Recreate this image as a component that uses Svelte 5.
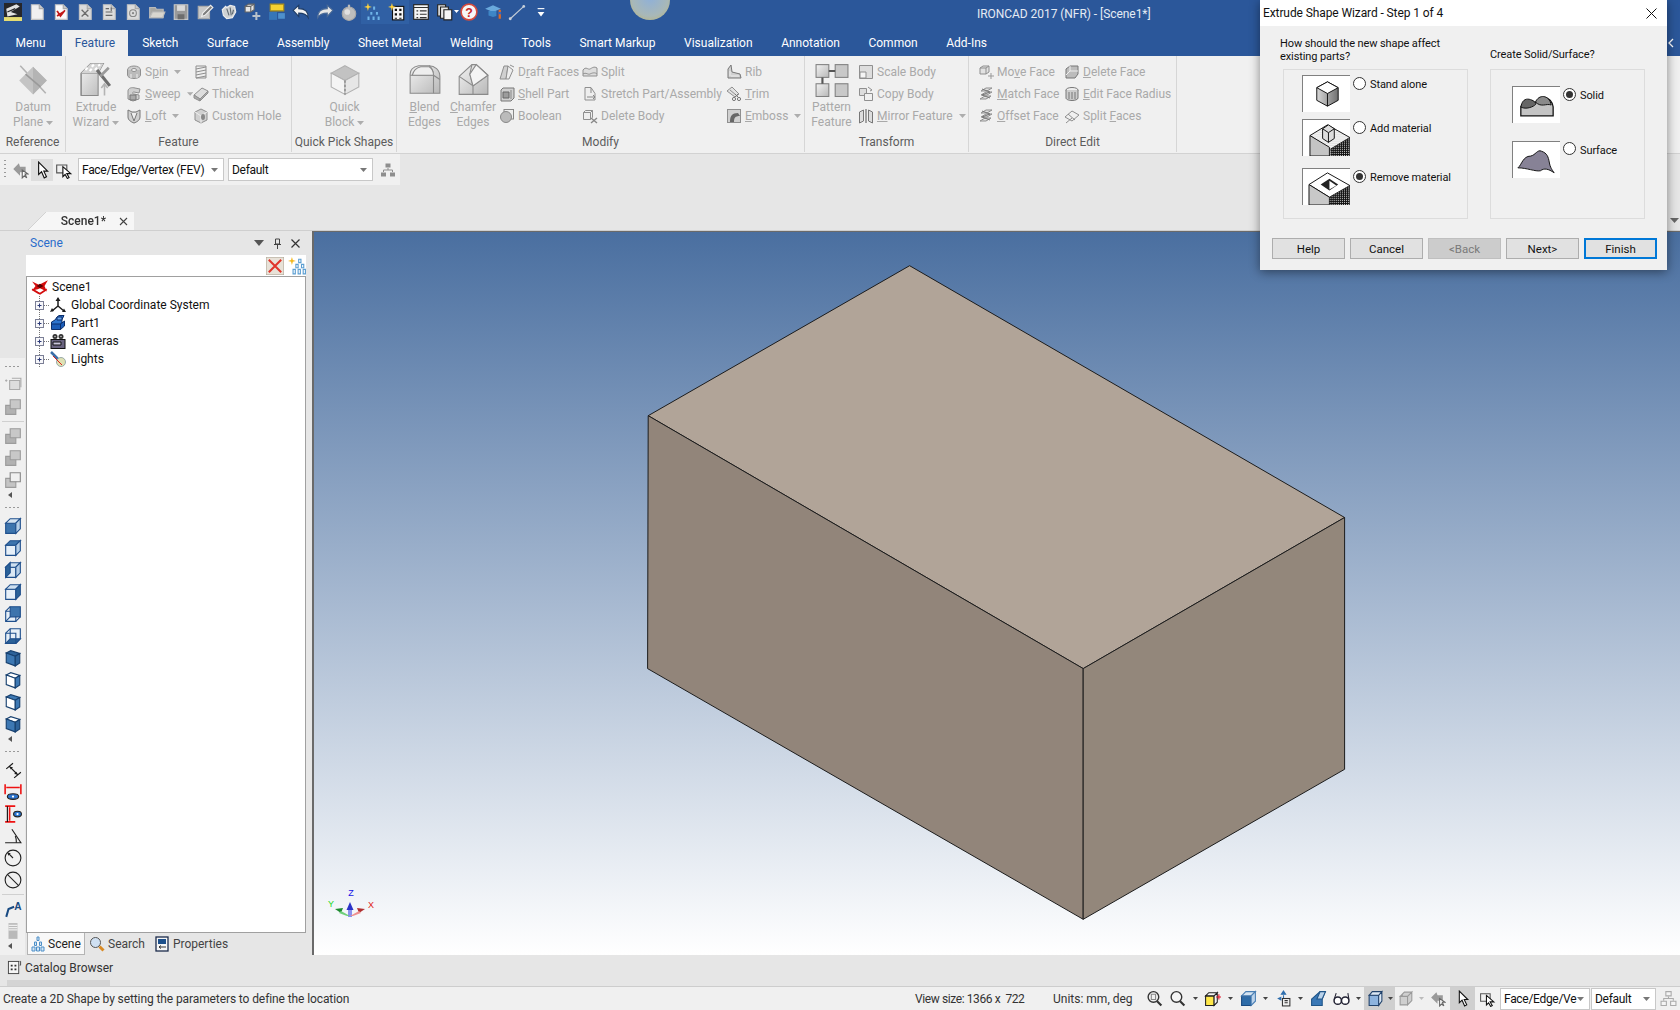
<script>
	const g = '#8f8f8f';
	const f = '#d0d0d0';
	const page = (x = '', bg = '#f0f0f0') =>
		`<path d="M3 1.500h7l3.500 3.500v9.500H3z" fill="${bg}" stroke="#c4c4c4"/><path d="M10 1.500V5h3.500" fill="#c8c8c8" stroke="#aaa"/>${x}`;
	const cubeBase = (front, top, side) =>
		`<path d="M1.500 5.500h9v9h-9z" fill="${front}" stroke="#1f4f8c"/><path d="M1.500 5.500l4-4h9l-4 4z" fill="${top}" stroke="#1f4f8c"/><path d="M10.500 5.500l4-4v9l-4 4z" fill="${side}" stroke="#1f4f8c"/>`;
	// small rotated cube: top, front, right face
	const turned = (a, b, c) =>
		`<path d="M2 3.500L6 1.500l8 2.500-4 2.500z" fill="${a}" stroke="#17406f"/><path d="M2 3.500l8 3v8.500l-8-3z" fill="${b}" stroke="#17406f"/><path d="M14 4l-4 2.500V15l4-2.500z" fill="${c}" stroke="#17406f"/>`;
	const stack = `<path d="M3 5l5-3h6l-5 3zM3 9l5-3h6l-5 3zM2 13l5-3h6l-5 3z" fill="#e0e0e0" stroke="${g}"/><path d="M4 3l8 3-8 3 8 3" fill="none" stroke="#777"/>`;

	const icons = {
		qlogo: `<rect width="16" height="16" fill="#26262a"/><path d="M2 5l9-4 3 2-8 5 6 2-9 2z" fill="#e2e2e2"/><path d="M3 8l7-3" stroke="#26262a"/><rect y="12.500" width="16" height="3.500" fill="#e6dc72"/>`,
		qnew: page(),
		qcheck: page(`<path d="M4.500 7l3 4.500 4-5M4.500 11.500L10 8" stroke="#c01818" stroke-width="1.600" fill="none"/>`, '#fafafa'),
		qa: page(`<path d="M5 6l3 3-3 3M11 6L8 9l3 3" stroke="#6c6c6c" fill="none" stroke-width="1.200"/>`, '#dcdcdc'),
		qb: page(`<path d="M5 5h3M5 8h6M5 11h6M10 4v3" stroke="#666" fill="none"/>`, '#dcdcdc'),
		qc: page(`<circle cx="8" cy="9" r="3" fill="none" stroke="#888"/><circle cx="8" cy="9" r="1" fill="#888"/>`, '#dcdcdc'),
		qopen: `<path d="M1.500 13V4h5l1 1.500h6V13z" fill="#a8a8a4" stroke="#bbb"/><path d="M1.500 13l2.500-5h11l-2 5z" fill="#d8d6cf" stroke="#bbb"/>`,
		qsave: `<path d="M2 1.500h12v13H2z" fill="#9a9a9a" stroke="#c8c8c8"/><path d="M4.500 2h7v5h-7z" fill="#dadada"/><path d="M5 10h6v4.500H5z" fill="#6d6d6d"/>`,
		qsaveas: `<path d="M2 3h10v11H2z" fill="#c8c8c8" stroke="#aaa"/><path d="M6 9l7-7 2 2-7 7-3 1z" fill="#7c7c7c" stroke="#eee"/>`,
		qprint: `<path d="M2 6l3-3 1 1 3-2 4 1 1 5-3 5-5 1-3-3z" fill="#cfd2d4" stroke="#eee"/><path d="M6 5l2 6M9 4l1 7M12 6l-1 4" stroke="#5f6a72"/>`,
		qplus: `<path d="M1 3l3-2h5v5l-3 2H1z" fill="#e6e6e6" stroke="#666"/><path d="M1 3h5v5M6 3l3-2" fill="none" stroke="#666"/><path d="M11 8v7M7.500 11.500h7" stroke="#b9c2ca" stroke-width="1.800"/>`,
		qbrowse: `<path d="M2 1h12v6H2z" fill="#f5d130" stroke="#a88e1c"/><path d="M1 8h7v7H1z" fill="#3676b8"/><path d="M9 9h6v5H9z" fill="#4e90cc"/>`,
		qundo: `<path d="M1 6.500l5-4.500v3c5 0 8.500 1.500 8.500 8C12.500 9.500 10 9 6 9v3z" fill="#f2f2f2" stroke="#1f3c64"/>`,
		qredo: `<path d="M15 6.500L10 2v3C5 5 1.500 6.500 1.500 13 3.500 9.500 6 9 10 9v3z" fill="#e6e6e6" stroke="#4a6a96"/>`,
		qball: `<circle cx="8" cy="9.500" r="6" fill="#bdbdbd" stroke="#a8a8a8"/><path d="M7 1.500h2v3H7z" fill="#bbb"/><circle cx="6.500" cy="8" r="2.500" fill="#e0e0e0"/>`,
		qtree: `<path d="M3.500 0l.8 2.700L7 3.500l-2.700.8L3.500 7l-.8-2.700L0 3.500l2.700-.8z" fill="#ffd23c"/><path d="M9 3v3M6.500 8v2.500M11.500 8v2.500M4 12v3M8.500 12v3M13 12v3" stroke="#6fb4e8" stroke-width="1.800"/>`,
		qgrid: `<rect x="4" y="3" width="10" height="12" fill="#f4f4f4" stroke="#111"/><path d="M6 5h2v2H6zM10 5h2v2h-2zM6 9h2v2H6zM10 9h2v2h-2zM6 13h2v1H6zM10 13h2v1h-2z" fill="#111"/><path d="M3.500 0l.8 2.700L7 3.500l-2.700.8L3.500 7l-.8-2.700L0 3.500l2.700-.8z" fill="#ffd23c"/>`,
		qlist: `<rect x="1.500" y="1.500" width="13" height="13" fill="#f6f6f6" stroke="#222"/><path d="M1.500 4h13M4 7h1.500M4 10h1.500M4 13h1.500M7 7h6M7 10h6M7 13h6" stroke="#333"/>`,
		qcopy: `<path d="M1.500 1.500h7v10h-7z" fill="#e0e0e0" stroke="#222"/><path d="M4 3.500h7v10H4z" fill="#e8e8e8" stroke="#222"/><path d="M7 6h7v9H7z" fill="#f6f6f6" stroke="#222"/>`,
		qhelp: `<circle cx="8" cy="8" r="7" fill="#f7f7f7" stroke="#d64a3c" stroke-width="1.400"/><text x="8" y="12" font-family="Liberation Sans" font-size="11" font-weight="700" text-anchor="middle" fill="#c62525">?</text>`,
		qcap: `<path d="M1 5l7-3 7 3-7 3z" fill="#6aa9dc"/><path d="M4 7v4l4 1.500 3-1V7z" fill="#3e86c6"/><path d="M13 6h2v8h-2z" fill="#e06a24"/><path d="M13 8h2v2h-2z" fill="#2a6ad0"/>`,
		qline: `<path d="M2 14L14 3" stroke="#c5ced8"/><circle cx="2" cy="14" r="1.300" fill="#c8d0da"/><circle cx="14" cy="3" r="1.200" fill="#c8d0da"/>`,
		qmore: `<path d="M5 5h6" stroke="#fff"/><path d="M5 8h6l-3 4z" fill="#fff"/>`,

		spin: `<ellipse cx="8" cy="6" rx="6.500" ry="4" fill="${f}" stroke="${g}"/><path d="M1.500 6v5c0 2 3 3.500 6.500 3.500s6.500-1.500 6.500-3.500V6" fill="#bbb" stroke="${g}"/><ellipse cx="8" cy="6" rx="2.500" ry="1.500" fill="#f2f2f2" stroke="${g}"/><path d="M5 10v4M11 10v4" stroke="#eee"/>`,
		sweep: `<path d="M2 5c0-3 4-4 7-3l5 1-1 4-5-1c-2 0-2 2 0 2l5 1v4l-6 2-5-2V9z" fill="${f}" stroke="${g}"/><path d="M4 9h6v5H4z" fill="#aaa" stroke="#777"/>`,
		loft: `<path d="M2 2l4 2h4l4-2v7c0 3-3 5-6 6-3-1-6-3-6-6z" fill="${f}" stroke="#777"/><path d="M5 5l3 8 3-8" fill="#eee" stroke="#777"/>`,
		thread: `<path d="M3 2h10v12H3z" fill="#eee" stroke="${g}"/><path d="M3 5l10-2M3 8l10-2M3 11l10-2M3 14l10-2" stroke="${g}"/>`,
		thicken: `<path d="M1 9l8-7 6 3-8 8z" fill="#ddd" stroke="${g}"/><path d="M1 9v3l6 3v-2zM7 13v2l8-8V5z" fill="#aaa" stroke="${g}"/>`,
		hole: `<path d="M8 1l6 3v8l-6 3-6-3V4z" fill="${f}" stroke="${g}"/><path d="M8 8l6-4M8 8v7M8 8L2 4" stroke="#eee" fill="none"/><ellipse cx="10" cy="9" rx="2" ry="3" fill="#888"/>`,
		draft: `<path d="M1 15l4-13h4l-2 13z" fill="${f}" stroke="${g}"/><path d="M9 2l5 4-4 9H7z" fill="#eee" stroke="${g}"/><path d="M11 1l4 2" stroke="${g}"/>`,
		shell: `<path d="M2 4l2-2h11v10l-3 3H2z" fill="${f}" stroke="#777"/><path d="M4 6h6v6H4z" fill="#9c9c9c" stroke="#666"/><path d="M12 4v9" stroke="#888"/>`,
		boolean: `<rect x="5" y="1.500" width="9.500" height="9.500" fill="#eee" stroke="#888"/><circle cx="7" cy="9" r="5.500" fill="#bbb" stroke="#888"/>`,
		split: `<path d="M1 6c3-4 5 0 7-1s4-3 7-1v8H1z" fill="#ddd" stroke="${g}"/><path d="M1 10c3-2 5 1 7 0s5-2 7 0" fill="none" stroke="${g}"/>`,
		stretch: `<path d="M3 14V1.500h6l4 6V14z" fill="#eee" stroke="${g}"/><path d="M5 11h8M11 9l2 2-2 2M9 2v5" stroke="#888" fill="none"/>`,
		delbody: `<path d="M1.500 4.500l2-2h7v7l-2 2h-7zM1.500 4.500h7v7M8.500 4.500l2-2" fill="#eee" stroke="${g}"/><path d="M9 10l6 5M15 10l-6 5" stroke="#888" stroke-width="1.400"/>`,
		rib: `<path d="M2 14V5l3-4 1 7 8 2 1 4z" fill="${f}" stroke="#777"/><path d="M5 12h8M4 7v5" stroke="#eee"/>`,
		trim: `<path d="M1 5l5-4 7 7-4 3z" fill="#e2e2e2" stroke="${g}"/><path d="M4 4l6 5" stroke="${g}"/><circle cx="8" cy="13" r="1.600" fill="none" stroke="#777"/><circle cx="13" cy="13" r="1.600" fill="none" stroke="#777"/><path d="M9 11l3-3M12 11L9 8" stroke="#777"/>`,
		emboss: `<rect x="1.500" y="1.500" width="13" height="13" fill="${f}" stroke="${g}"/><path d="M4 14c0-6 2-9 8-9l2 3c-5 0-6 2-6 6z" fill="#666"/>`,
		scale: `<path d="M1.500 1.500h13v13h-13z" fill="#ddd" stroke="${g}"/><path d="M2 8h6v6H2z" fill="#f5f5f5" stroke="${g}"/>`,
		copybody: `<path d="M1.500 2.500h7v7h-7z" fill="#ddd" stroke="${g}"/><path d="M6.500 7.500h8v7h-8z" fill="#f0f0f0" stroke="${g}"/><path d="M10 1l4 3-2 1" fill="none" stroke="${g}"/>`,
		mirror: `<path d="M1.500 4l4-2v11l-4 2zM14.500 4l-4-2v11l4 2z" fill="#ddd" stroke="#777"/><path d="M8 1v14" stroke="#555"/>`,
		moveface: `<path d="M2 4l3-2h6v6l-3 2H2zM2 4h6v6M8 4l3-2" fill="#e2e2e2" stroke="${g}"/><path d="M13 9v6M10 12h6" stroke="#999"/>`,
		matchface: stack,
		offsetface: stack,
		delface: `<path d="M2 5l4-3h8v8l-3 4H2z" fill="#bcbcbc" stroke="#777"/><path d="M6 2v5h8M6 7l-4 4" stroke="#eee" fill="none"/>`,
		radius: `<ellipse cx="8" cy="4" rx="6" ry="2.500" fill="#eee" stroke="#777"/><path d="M2 4v8c0 1.500 3 2.500 6 2.500s6-1 6-2.500V4" fill="#ccc" stroke="#777"/><path d="M8 6v7M5 6v7M11 6v7" stroke="#777"/>`,
		splitface: `<path d="M1 9l7-6 7 4-7 6z" fill="#f0f0f0" stroke="${g}"/><path d="M2 15l6-5M4 6l7 6" stroke="${g}"/>`,

		selBack: `<path d="M2 7l5-5 1 3h5v5H8v3z" fill="#9a9a9a"/><path d="M10 8l0 7 1.800-1.800L14 15l-1.500-3.500h2.500z" fill="#fff" stroke="#666"/>`,
		arrow: `<path d="M5 1l0 11 2.600-2.400L10 15l2-1-2.400-5H13z" fill="#fff" stroke="#111"/>`,
		boxArrow: `<path d="M1.500 3.500h9v7h-9z" fill="none" stroke="#555"/><path d="M7 5l0 9 2-2 2 3.500 1.500-.8-2-3.500H14z" fill="#fff" stroke="#111"/>`,
		hier: `<path d="M5.500 1.500h5v4h-5zM1 10.500h5v4H1zM10 10.500h5v4h-5z" fill="#8e8e8e"/><path d="M8 6v2M3.500 10V8h9v2" stroke="#8e8e8e" fill="none"/>`,
		hierDim: `<path d="M5.500 1.500h5v4h-5zM1 10.500h5v4H1zM10 10.500h5v4h-5z" fill="#f4f4f4" stroke="#aaa"/><path d="M8 6v2M3.500 10V8h9v2" stroke="#aaa" fill="none"/>`,

		treeTop: `<path d="M3.500 0l.8 2.700L7 3.500l-2.700.8L3.500 7l-.8-2.700L0 3.500l2.700-.8z" fill="#f3b81f"/><path d="M9.500 2h2v3h-2zM7 6.500h2v3H7zM12 6.500h2v3h-2zM4.500 11h2v4h-2zM9 11h2v4H9zM13.500 11h2v4h-2z" fill="none" stroke="#5d9fd2"/>`,
		treeBlue: `<path d="M7 1h2v3.500H7zM4.500 6h2v3.500h-2zM9.500 6h2v3.500h-2zM2 11h3v4H2zM6.500 11h3v4h-3zM11 11h3v4h-3z" fill="#d6e6f4" stroke="#4c8fc8"/>`,
		sceneRed: `<path d="M1 3l6 3 2-1 6-3-3 5 2 5-6-3-2 1-5 1 3-4z" fill="#d40d0d"/><path d="M5 7l3 2 3-2-3-2z" fill="#5c0000"/><path d="M1 10l5 3 2 1 6-4" fill="none" stroke="#d40d0d" stroke-width="1.600"/>`,
		axes: `<path d="M8 9V1.500M8 9l-6 5M8 9l6 5" stroke="#1d1d1d" stroke-width="1.500" fill="none"/><path d="M8 0l2.500 4h-5zM0 15l2-4 2 3zM16 15l-4 0 2-3.500z" fill="#1d1d1d"/>`,
		part: `<path d="M7 2l2-1.500h5l-2 4V8L3 13.500H1.500V7L5 5z" fill="#2d75cf" stroke="#0c2f6c"/><path d="M1.500 9h9v5.500h-9zM10.500 9l4-3v5l-4 3.500z" fill="#1b5cb7" stroke="#0c2f6c"/><path d="M7 2h5v3H7z" fill="#6aa7ee" stroke="#0c2f6c"/>`,
		camera: `<circle cx="5" cy="3.500" r="2.500" fill="#333"/><circle cx="11" cy="3.500" r="2.500" fill="#333"/><circle cx="5" cy="3.500" r=".8" fill="#ccc"/><circle cx="11" cy="3.500" r=".8" fill="#ccc"/><rect x="1" y="6.500" width="14" height="9" fill="#6a6480" stroke="#111"/><path d="M3 9h8v3H3z" fill="#c9c4da" stroke="#111"/>`,
		light: `<path d="M1 1l8 8" stroke="#3b6ea8" stroke-width="2.500"/><circle cx="11" cy="11" r="4.500" fill="#dfe2b4" stroke="#9aa"/><path d="M3 5l9 9" stroke="#e0201a"/>`,
		redX: `<rect width="16" height="16" fill="#e8e2d8" stroke="#b0a898"/><path d="M2.500 2.500l11 11M13.500 2.500l-11 11" stroke="#e1352a" stroke-width="1.800"/>`,
		mag: `<circle cx="6.500" cy="6.500" r="5" fill="#cfe0f2" stroke="#555"/><path d="M10.500 10.500l4 4" stroke="#d98a24" stroke-width="3"/>`,
		props: `<rect x="2" y="1" width="12" height="14" fill="#f6f6f6" stroke="#1c2c4c" stroke-width="1.300"/><rect x="4" y="3" width="8" height="5" fill="#1c4f8a"/><path d="M5 11h7M5 11l2-1.500M5 11l2 1.500" stroke="#333" fill="none"/>`,
		catalog: `<rect x="1.500" y="1.500" width="11" height="13" fill="#f5f5f5" stroke="#444"/><path d="M4 5h2v2H4zM8 5h2v2H8zM4 9h2v2H4zM8 9h2v2H8z" fill="#333"/><path d="M13.500 1.500h1v4h-1" stroke="#444" fill="none"/>`,

		gPlus: `<path d="M5 4h9v8H5z" fill="#ddd" stroke="#aaa"/><path d="M3 4H1M2 3v2" stroke="#aaa"/><path d="M7 2h8v8" fill="none" stroke="#aaa"/>`,
		gBoxes: `<path d="M1.500 6.500h9v8h-9z" fill="#b2b2b2" stroke="#9c9c9c"/><path d="M5.500 1.500h9v8h-9z" fill="#c8c8c8" stroke="#9c9c9c"/>`,
		gLight: `<path d="M1.500 6.500h9v8h-9z" fill="#c4c4c4" stroke="#9c9c9c"/><path d="M5.500 1.500h9v8h-9z" fill="#f0f0f0" stroke="#888"/>`,
		cFront: cubeBase('#3d74ad', '#d5e3f1', '#b4cde6'),
		cTop: cubeBase('#e6eff8', '#3d74ad', '#b4cde6'),
		cLeft: `<path d="M1.500 5.500h9v9h-9z" fill="#dbe8f4" stroke="#1f4f8c"/><path d="M1.500 5.500l4-4h9l-4 4z" fill="#cfe0f0" stroke="#1f4f8c"/><path d="M10.500 5.500l4-4v9l-4 4z" fill="#b4cde6" stroke="#1f4f8c"/><path d="M1.500 5.500l4-4v9l-4 4z" fill="#2b6299" stroke="#1f4f8c"/>`,
		cRight: cubeBase('#e6eff8', '#cfe0f0', '#2b6299'),
		cBack: `<path d="M1.500 5.500h9v9h-9z" fill="#e6eff8" stroke="#1f4f8c"/><path d="M5.500 1.500h9v9h-9z" fill="#3d74ad" stroke="#1f4f8c"/><path d="M1.500 5.500l4-4M10.500 14.500l4-4M1.500 14.500l4-4" stroke="#1f4f8c"/>`,
		cBottom: `<path d="M1.500 5.500l4-4h9v9l-4 4h-9z" fill="#e6eff8" stroke="#1f4f8c"/><path d="M1.500 14.500l4-4h9l-4 4z" fill="#2b6299" stroke="#1f4f8c"/><path d="M5.500 1.500v9M1.500 5.500h9v9" stroke="#1f4f8c" fill="none"/>`,
		i1: turned('#2d6299', '#3d78b3', '#2d6299'),
		i2: turned('#ffffff', '#ffffff', '#3d78b3'),
		i3: turned('#3d78b3', '#ffffff', '#3d78b3'),
		i4: turned('#ffffff', '#3d78b3', '#2d6299'),
		dimL: `<path d="M2 7l6-5M9 15l6-5M5 5l7 7" stroke="#1a1a1a" fill="none"/><path d="M5 5l3 .5-2 2zM12 12l-3-.5 2-2z" fill="#1a1a1a"/>`,
		dimH: `<path d="M1 1v9M15 1v9M2 4h12" stroke="#e11" stroke-width="1.400"/><ellipse cx="8" cy="12" rx="5" ry="2.500" fill="#2a73cc" stroke="#222"/><circle cx="8" cy="12" r="1" fill="#fff"/>`,
		dimV: `<path d="M1 1h9M1 15h9M5 2v12" stroke="#e11" stroke-width="1.400"/><path d="M3 1v14" stroke="#111"/><ellipse cx="12" cy="8" rx="3.500" ry="2.500" fill="#2a73cc" stroke="#222"/><circle cx="12" cy="8" r="1" fill="#fff"/>`,
		angle: `<path d="M1 14h14L7 2" fill="none" stroke="#222"/><path d="M10 8c1 2 1 4 1 6" fill="none" stroke="#222"/>`,
		radial: `<circle cx="8" cy="8" r="7" fill="none" stroke="#222"/><path d="M8 8L3.500 3.500" stroke="#222"/><path d="M3 3l3 .8-2.200 2.200z" fill="#222"/>`,
		diam: `<circle cx="8" cy="8" r="7" fill="none" stroke="#222"/><path d="M3 3l10 10" stroke="#222"/>`,
		textA: `<path d="M2 15l2-7 5-2" fill="none" stroke="#184a82" stroke-width="1.800"/><text x="9" y="9" font-family="Liberation Sans" font-size="9" font-weight="700" fill="#184a82">A</text>`,
		bars: `<rect x="4" y="1" width="8" height="14" fill="#b9b9b9"/><path d="M4 3h8M4 5h8M4 7h8" stroke="#eee"/>`,

		zoomAll: `<circle cx="7" cy="6.500" r="5" fill="none" stroke="#333" stroke-width="1.300"/><path d="M5 4h4v5H5z" fill="none" stroke="#888"/><path d="M10.500 10.500l4 4" stroke="#333" stroke-width="2"/>`,
		zoomIn: `<circle cx="7" cy="6.500" r="5" fill="#f5f5f5" stroke="#333" stroke-width="1.300"/><path d="M10.500 10.500l4 4" stroke="#333" stroke-width="2"/>`,
		yellowBox: `<path d="M1.500 5.500h8v9h-8z" fill="#ffe84a" stroke="#222"/><path d="M1.500 5.500l3-3h8l-3 3zM9.500 5.500l3-3v9l-3 3z" fill="#f5f5f5" stroke="#222"/><path d="M14 4v5M11.500 6.500h5" stroke="#e0142a"/>`,
		blueBox: `<path d="M1.500 5.500h9v9h-9z" fill="#2e6ca8" stroke="#1a4a80"/><path d="M1.500 5.500l4-4h9l-4 4z" fill="#d6e4f2" stroke="#4a7fb4"/><path d="M10.500 5.500l4-4v9l-4 4z" fill="#bcd3ea" stroke="#4a7fb4"/>`,
		tools: `<path d="M8 1l2 3H6zM8 5v3" fill="#2f6fae" stroke="#2f6fae"/><path d="M2 8l4-2v4zM1 8h2" fill="#2f6fae"/><rect x="7" y="8" width="7" height="7" fill="#f0f0f0" stroke="#333"/><path d="M9 10h3M9 12h3" stroke="#333"/>`,
		slant: `<path d="M1.500 8.500l8-7h5l-3 7v6h-10z" fill="#3a78b6" stroke="#205588"/><path d="M9.500 1.500h5l-3 7h-5z" fill="#b9d2ea" stroke="#205588"/>`,
		glasses: `<circle cx="4.500" cy="10" r="3.500" fill="#fff" stroke="#223" stroke-width="1.400"/><circle cx="11.500" cy="10" r="3.500" fill="#fff" stroke="#223" stroke-width="1.400"/><path d="M1 9l2-6M15 9l-1-6" stroke="#223" fill="none"/>`,
		selBox: `<path d="M2 5h9v9.500H2z" fill="#8db3de" stroke="#20426c"/><path d="M2 5l3-3.500h9L11 5zM11 5l3-3.500v9l-3 4z" fill="#dce8f4" stroke="#20426c"/>`,
		greyBox: `<path d="M2 6h7v8H2zM2 6l4-4h7l-4 4zM9 6l4-4v8l-4 4zM4 6V4" fill="#cfcfcf" stroke="#9a9a9a"/>`
	};

	const quick = [
		'qnew', 'qcheck', 'qa', 'qb', 'qc', 'qopen', 'qsave', 'qsaveas', 'qprint', 'qplus', 'qbrowse',
		'qundo', 'qredo', 'qball', 'qtree', 'qgrid', 'qlist', 'qcopy', 'qhelp', 'qcap', 'qline', 'qmore'
	];

	const tabs = [
		'Menu', 'Feature', 'Sketch', 'Surface', 'Assembly', 'Sheet Metal', 'Welding', 'Tools',
		'Smart Markup', 'Visualization', 'Annotation', 'Common', 'Add-Ins'
	];

	const small = (w, ...items) => ({ kind: 'small', w, pad: 0, items });
	const large = (w, icon, lines, caret = false) => ({ kind: 'large', w, icon, lines, caret });
	const it = (icon, text, caret = false) => ({ icon, text, caret });

	// widths are the group spans read off the reference
	const groups = [
		{ label: 'Reference', w: 66, cols: [large(66, 'datum', ['Datum', 'Plane'], true)] },
		{
			label: 'Feature',
			w: 226,
			cols: [
				large(60, 'extrude', ['Extrude', 'Wizard'], true),
				small(67, it('spin', 'S_pin', true), it('sweep', '_Sweep', true), it('loft', '_Loft', true)),
				small(96, it('thread', 'Thread'), it('thicken', 'Thicken'), it('hole', 'Custom Hole'))
			]
		},
		{ label: 'Quick Pick Shapes', w: 105, cols: [large(105, 'quickb', ['Quick', 'Block'], true)] },
		{
			label: 'Modify',
			w: 408,
			cols: [
				large(55, 'blend', ['_Blend', 'Edges']),
				large(42, 'chamfer', ['_Chamfer', 'Edges']),
				{ ...small(88, it('draft', 'D_raft Faces'), it('shell', '_Shell Part'), it('boolean', 'Boolean')), pad: 5 },
				small(144, it('split', 'Split'), it('stretch', 'Stretch Part/Assembly'), it('delbody', 'Delete Body')),
				small(79, it('rib', 'Rib'), it('trim', '_Trim'), it('emboss', '_Emboss', true))
			]
		},
		{
			label: 'Transform',
			w: 164,
			cols: [
				large(53, 'pattern', ['Pattern', 'Feature']),
				small(111, it('scale', 'Scale Body'), it('copybody', 'Copy Body'), it('mirror', '_Mirror Feature', true))
			]
		},
		{
			label: 'Direct Edit',
			w: 208,
			cols: [
				{ ...small(95, it('moveface', 'Mo_ve Face'), it('matchface', '_Match Face'), it('offsetface', '_Offset Face')), pad: 9 },
				small(110, it('delface', '_Delete Face'), it('radius', '_Edit Face Radius'), it('splitface', 'Split _Faces'))
			]
		}
	];

	const bigIcons = {
		datum: `<path d="M4 3l24 26" stroke="#b2b2b2" stroke-width="1.500"/><path d="M16 4l13 13-13 13L3 17z" fill="#c4c4c4"/><path d="M16 4l13 13-13 13" fill="#b4b4b4"/><path d="M9 11l14 12" stroke="#9a9a9a" stroke-width="1.500"/>`,
		extrude: `<path d="M2 10L11 1h12l-5 9v21H2z" fill="url(#sheen)" stroke="#8a8a8a"/><path d="M2 10h16M2 31V10" fill="none" stroke="#8a8a8a"/><path d="M11 1h12l-5 9H2z" fill="#d4d4d4"/><path d="M6 7l2-2M10 8l2-2M12 4l2-2M15 7l2-2M18 3l2-1" stroke="#fff" stroke-width="2"/><path d="M17 7l12 15" stroke="#6e6e6e" stroke-width="3"/><path d="M28 5l-8 8" stroke="#9a9a9a" stroke-width="2.500"/><path d="M24 20v11M21 24l3-4 3 4" stroke="#b4b4b4" stroke-width="1.500" fill="none"/>`,
		quickb: `<path d="M16 3l13 7-13 7-13-7z" fill="#c2c2c2" stroke="#b0b0b0"/><path d="M3 10l13 7v13L3 23z" fill="#f4f4f4" stroke="#b0b0b0"/><path d="M29 10l-13 7v13l13-7z" fill="#e6e6e6" stroke="#b0b0b0"/><path d="M16 17v13" stroke="#777" stroke-dasharray="2 2"/>`,
		blend: `<path d="M2 11c0-4 3-7 8-8h10c5 0 10 4 10 10v16H2z" fill="url(#sheen)" stroke="#8a8a8a"/><path d="M2 12h22V29M24 12c0-4-2-7-4-9M24 12l6 4" fill="none" stroke="#8a8a8a"/><path d="M12 4h8c3 2 4 5 4 8H4c1-4 4-7 8-8z" fill="#eee" stroke="#8a8a8a"/>`,
		chamfer: `<path d="M3 13L15 2h4l11 10v18H3z" fill="url(#sheen)" stroke="#8a8a8a"/><path d="M3 13l13 9v8M16 22l14-10M15 2l-2 9 3 11M19 2l11 10" fill="none" stroke="#8a8a8a"/><path d="M19 2l11 10-14 10-3-11 6-9z" fill="#f4f4f4" stroke="#8a8a8a"/>`,
		pattern: `<rect x="1" y="2" width="12" height="12" fill="url(#sheen)" stroke="#808080"/><rect x="19" y="2" width="12" height="12" fill="#c8c8c8" stroke="#808080"/><rect x="1" y="20" width="12" height="12" fill="url(#sheen)" stroke="#808080"/><rect x="19" y="20" width="12" height="12" fill="#c8c8c8" stroke="#808080"/><path d="M7 14v6M13 8h6" stroke="#555" stroke-width="2"/>`
	};

	const rail = [
		'grip', 'gPlus', 'gBoxes', 'sep', 'gBoxes', 'gBoxes', 'gLight', 'back', 'grip',
		'cFront', 'cTop', 'cLeft', 'cRight', 'cBack', 'cBottom', 'i1', 'i2', 'i3', 'i4', 'back', 'grip',
		'dimL', 'dimH', 'dimV', 'angle', 'radial', 'diam', 'sep', 'textA', 'bars', 'back'
	];

	const tree = [
		{ icon: 'axes', text: 'Global Coordinate System' },
		{ icon: 'part', text: 'Part1' },
		{ icon: 'camera', text: 'Cameras' },
		{ icon: 'light', text: 'Lights' }
	];

	const statusTools = [
		{ n: 'zoomAll', w: 23 }, { n: 'zoomIn', w: 23 }, { c: 1, w: 12 }, { n: 'yellowBox', w: 22 }, { c: 1, w: 14 },
		{ n: 'blueBox', w: 22 }, { c: 1, w: 13 }, { n: 'tools', w: 22 }, { c: 1, w: 13 }, { n: 'slant', w: 23 },
		{ n: 'glasses', w: 23 }, { c: 1, w: 11 }, { n: 'selBox', w: 22, on: 1 }, { c: 1, w: 9, on: 1 },
		{ n: 'greyBox', w: 22 }, { c: 1, w: 8, dim: 1 }, { n: 'selBack', w: 25 }, { n: 'arrow', w: 25, on: 1 },
		{ n: 'boxArrow', w: 25 }
	];

	const parts = (s) => {
		const i = s.indexOf('_');
		return i < 0 ? [s, '', ''] : [s.slice(0, i), s[i + 1], s.slice(i + 2)];
	};
</script>

{#snippet ic(name, size = 16)}
	<svg class="ic" width={size} height={size} viewBox="0 0 16 16">{@html icons[name]}</svg>
{/snippet}

{#snippet caret()}
	<svg class="caret" width="7" height="4" viewBox="0 0 7 4"><path d="M0 0h7L3.500 4z" /></svg>
{/snippet}

{#snippet label(s)}
	{@const p = parts(s)}
	{p[0]}<u>{p[1]}</u>{p[2]}
{/snippet}

{#snippet expander()}
	<svg class="exp" width="19" height="18" viewBox="0 0 19 18">
		<path d="M8.500 0v18" stroke="#777" stroke-dasharray="1 1" />
		<path d="M13 9.500h6" stroke="#777" stroke-dasharray="1 1" />
		<rect x="4.500" y="5.500" width="8" height="8" fill="#f7f7fa" stroke="#7b7f96" />
		<path d="M6.500 9.500h4M8.500 7.500v4" stroke="#2c3a78" />
	</svg>
{/snippet}

{#snippet combo(text, w)}
	<div class="combo" style="width:{w}px"><span>{text}</span><svg class="caret" width="7" height="4" viewBox="0 0 7 4"><path d="M0 0h7L3.500 4z" /></svg></div>
{/snippet}

<svg class="defs" width="0" height="0">
	<defs>
		<linearGradient id="sheen" x1="0" y1="0" x2="1" y2="1">
			<stop offset="0" stop-color="#f2f2f2" />
			<stop offset="1" stop-color="#b8b8b8" />
		</linearGradient>
		<linearGradient id="cubeSide" x1="0" y1="0" x2="1" y2="0">
			<stop offset="0" stop-color="#d8d8d8" />
			<stop offset="1" stop-color="#707070" />
		</linearGradient>
		<pattern id="hatch" width="2" height="2" patternUnits="userSpaceOnUse">
			<rect width="2" height="2" fill="#111" />
			<rect width="1" height="1" fill="#ccc" />
		</pattern>
		<pattern id="lines" width="2" height="2" patternUnits="userSpaceOnUse">
			<rect width="2" height="2" fill="#fff" />
			<path d="M0 0h2" stroke="#777" stroke-width=".6" />
		</pattern>
	</defs>
</svg>

<div class="app">
	<header class="titlebar">
		<div class="logo">{@render ic('qlogo', 18)}</div>
		{#each quick as q, i}
			<div class="qcell" class:hot={i === 14 || i === 15}>
				{@render ic(q, 18)}
				{#if q === 'qcopy'}<svg class="qcaret" width="5" height="3" viewBox="0 0 5 3"><path d="M0 0h5L2.500 3z" fill="#fff" /></svg>{/if}
			</div>
		{/each}
		<div class="apptitle">IRONCAD 2017 (NFR) - [Scene1*]</div>
	</header>
	<div class="glass"></div>

	<nav class="tabs">
		{#each tabs as t}
			<div class="tab" class:active={t === 'Feature'}>{t}</div>
		{/each}
		<svg class="collapse" width="8" height="10" viewBox="0 0 8 10"><path d="M6 1L2 5l4 4" fill="none" stroke="#fff" stroke-width="1.300" /></svg>
	</nav>

	<section class="ribbon">
		{#each groups as grp}
			<div class="group" style="width:{grp.w}px">
				<div class="gbody">
					{#each grp.cols as col}
						{#if col.kind === 'large'}
							<div class="large" style="width:{col.w}px">
								<svg class="bigic" width="34" height="34" viewBox="0 0 32 32">{@html bigIcons[col.icon]}</svg>
								<div class="line">{@render label(col.lines[0])}</div>
								<div class="line">{@render label(col.lines[1])}{#if col.caret}{@render caret()}{/if}</div>
							</div>
						{:else}
							<div class="smallcol" style="width:{col.w}px;padding-left:{col.pad}px">
								{#each col.items as item}
									<div class="sitem">
										{@render ic(item.icon, 16)}
										<span>{@render label(item.text)}</span>
										{#if item.caret}{@render caret()}{/if}
									</div>
								{/each}
							</div>
						{/if}
					{/each}
				</div>
				<div class="glabel">{grp.label}</div>
			</div>
		{/each}
	</section>

	<div class="seltool">
		<span class="grip-v"></span>
		<div class="stool">{@render ic('selBack', 18)}</div>
		<div class="stool on">{@render ic('arrow', 18)}</div>
		<div class="stool before-combo">{@render ic('boxArrow', 18)}</div>
		{@render combo('Face/Edge/Vertex (FEV)', 146)}
		{@render combo('Default', 145)}
		<div class="stool">{@render ic('hier', 16)}</div>
	</div>

	<div class="tabstrip">
		<div class="doctabwrap">
			<div class="doctab">
				<span>Scene1*</span>
				<svg width="9" height="9" viewBox="0 0 9 9"><path d="M1 1l7 7M8 1L1 8" stroke="#444" stroke-width="1.100" /></svg>
			</div>
		</div>
	</div>

	<main class="work">
		<aside class="rail">
			{#each rail as r}
				{#if r === 'grip'}
					<div class="r-grip"></div>
				{:else if r === 'sep'}
					<div class="r-sep"></div>
				{:else if r === 'back'}
					<div class="r-back"><svg width="4" height="6" viewBox="0 0 4 6"><path d="M4 0v6L0 3z" fill="#555" /></svg></div>
				{:else}
					<div class="r-ic">{@render ic(r, 18)}</div>
				{/if}
			{/each}
		</aside>

		<div class="panel">
			<div class="phead">
				<span class="ptitle">Scene</span>
				<svg width="10" height="6" viewBox="0 0 10 6"><path d="M0 0h10L5 6z" fill="#555" /></svg>
				<svg width="9" height="11" viewBox="0 0 9 11"><path d="M2.500 1h4v5h-4zM1 6.500h7M4.500 7v4" fill="none" stroke="#444" /></svg>
				<svg width="9" height="9" viewBox="0 0 9 9"><path d="M.5.500l8 8M8.500.500l-8 8" stroke="#333" stroke-width="1.200" /></svg>
			</div>
			<div class="pfilter">
				{@render ic('redX', 18)}
				{@render ic('treeTop', 18)}
			</div>
			<div class="tree">
				<div class="troot">
					<span class="rooticon">{@render ic('sceneRed', 18)}</span>
					<span>Scene1</span>
				</div>
				{#each tree as node}
					<div class="trow">
						{@render expander()}
						{@render ic(node.icon, 16)}
						<span>{node.text}</span>
					</div>
				{/each}
			</div>
			<div class="ptabs">
				<div class="ptab on">{@render ic('treeBlue', 16)}Scene</div>
				<div class="ptab">{@render ic('mag', 16)}Search</div>
				<div class="ptab">{@render ic('props', 16)}Properties</div>
			</div>
		</div>

		<div class="viewport">
			<svg class="scene" viewBox="0 0 1366 722" width="1366" height="722">
				<g stroke="#1c1c1c" stroke-width="1" stroke-linejoin="round">
					<path d="M595.600 33.700L334.200 183.700L769.200 436.600L1030.600 285.500Z" fill="#b1a498" />
					<path d="M334.200 183.700L333.600 436.600L769.200 687.300L769.200 436.600Z" fill="#92857a" />
					<path d="M769.200 436.600L1030.600 285.500L1030.600 537.300L769.200 687.300Z" fill="#93877b" />
				</g>
				<g class="triad">
					<path d="M34 678h4v7h-4z" fill="#8a90ee" />
					<path d="M36 670l3.500 8h-7z" fill="#2a32c8" />
					<path d="M21 677l8-1-2 5z" fill="#1e8a30" />
					<path d="M27 679l9 5-3 0-8-3z" fill="#6fd07a" />
					<path d="M51 677l-8-1 2 5z" fill="#b03030" />
					<path d="M45 679l-9 5 3 0 8-3z" fill="#ee9090" />
					<text x="37" y="664" fill="#1414e6">Z</text>
					<text x="17" y="675" fill="#1cd81c">Y</text>
					<text x="57" y="676" fill="#e01616">X</text>
				</g>
			</svg>
			<svg class="vcaret" width="9" height="5" viewBox="0 0 9 5"><path d="M0 0h9L4.500 5z" fill="#666" /></svg>
		</div>
	</main>

	<div class="catalog">
		<div class="catlabel">{@render ic('catalog', 15)}<span>Catalog Browser</span></div>
		<div class="catbar"></div>
	</div>

	<footer class="status">
		<span class="s-msg">Create a 2D Shape by setting the parameters to define the location</span>
		<span class="s-view">View size: 1366 x  722</span>
		<span class="s-units">Units: mm, deg</span>
		{#each statusTools as t}
			<div class="s-cell" class:on={t.on} style="width:{t.w}px">
				{#if t.c}
					<svg width="5" height="3" viewBox="0 0 5 3"><path d="M0 0h5L2.500 3z" fill={t.dim ? '#bbb' : '#444'} /></svg>
				{:else}
					{@render ic(t.n, 17)}
				{/if}
			</div>
		{/each}
		{@render combo('Face/Edge/Ve', 90)}
		{@render combo('Default', 65)}
		<div class="s-cell" style="width:22px">{@render ic('hierDim', 17)}</div>
	</footer>

	<div class="dialog">
		<div class="dtitle">
			<span>Extrude Shape Wizard - Step 1 of 4</span>
			<svg width="11" height="11" viewBox="0 0 11 11"><path d="M.5.500l10 10M10.500.500l-10 10" stroke="#111" stroke-width="1" /></svg>
		</div>
		<div class="dbody">
			<div class="dcols">
				<div class="dcol left">
					<p class="dq two">How should the new shape affect<br />existing parts?</p>
					<div class="dbox">
						<div class="opt">
							<svg class="thumb" viewBox="0 0 48 37">
								<path d="M25 6l11 6v13l-11 6-11-6V12z" fill="url(#cubeSide)" stroke="#111" />
								<path d="M25 6l11 6-11 6-11-6z" fill="#fff" stroke="#111" />
								<path d="M25 18v13" stroke="#111" />
							</svg>
							<span class="radio"></span><span class="rlabel">Stand alone</span>
						</div>
						<div class="opt">
							<svg class="thumb" viewBox="0 0 48 37">
								<path d="M7 16L25 5l23 13-20 12z" fill="url(#lines)" stroke="#111" />
								<path d="M7 16v21h20V28z" fill="#c4c4c4" stroke="#111" />
								<path d="M28 30l20-12v19H28z" fill="url(#hatch)" />
								<path d="M26 5l6 4v10l-6 4-6-4V9z" fill="#ddd" stroke="#111" />
								<path d="M20 9l6 4 6-4M26 13v10" fill="none" stroke="#111" />
							</svg>
							<span class="radio"></span><span class="rlabel">Add material</span>
						</div>
						<div class="opt gapped">
							<svg class="thumb" viewBox="0 0 48 37">
								<path d="M6 16L25 4l23 13-21 12z" fill="#fff" stroke="#111" />
								<path d="M6 16v21h21V29z" fill="#c8c8c8" stroke="#111" />
								<path d="M27 29l21-12v20H27z" fill="url(#hatch)" />
								<path d="M18 16l9-6 9 6-9 6z" fill="#222" />
								<path d="M27 12l7 5-7 4z" fill="#fff" />
							</svg>
							<span class="radio checked"></span><span class="rlabel">Remove material</span>
						</div>
					</div>
				</div>
				<div class="dcol right">
					<p class="dq one">Create Solid/Surface?</p>
					<div class="dbox">
						<div class="opt">
							<svg class="thumb" viewBox="0 0 48 36">
								<path d="M8 20c4-8 10-8 15-4 3-8 16-8 18 4v9H8z" fill="#c4c4c4" stroke="#111" stroke-width="1.300" />
								<path d="M8 20c1-5 3-8 7-8 4 0 8 3 8 4 3 1-8 8-15 4z" fill="#666" stroke="#111" />
								<path d="M23 15c3-8 14-8 16 3-5-2-10 3-16-3z" fill="#8a8a8a" stroke="#111" />
							</svg>
							<span class="radio checked"></span><span class="rlabel">Solid</span>
						</div>
						<div class="opt second">
							<svg class="thumb" viewBox="0 0 48 36">
								<path d="M5 26c4-3 5-12 13-12 5-1 7-7 11-5 6 2 7 6 8 11 1 6 3 8 5 11-6-4-10-5-14-2-5 1-14-3-23-3z" fill="#878296" stroke="#111" />
							</svg>
							<span class="radio"></span><span class="rlabel">Surface</span>
						</div>
					</div>
				</div>
			</div>
			<div class="dbuttons">
				<button>Help</button>
				<button>Cancel</button>
				<button class="disabled">&lt;Back</button>
				<button>Next&gt;</button>
				<button class="primary">Finish</button>
			</div>
		</div>
	</div>
</div>

<style>
	:global(body) {
		margin: 0;
		background: #e6e6e6;
	}

	.defs {
		position: absolute;
	}

	.app {
		position: relative;
		display: flex;
		flex-direction: column;
		width: 1680px;
		height: 1010px;
		overflow: hidden;
		background: #e6e6e6;
		font-family: Roboto, 'Liberation Sans', sans-serif;
		font-size: 12px;
		color: #111;
	}

	.ic {
		display: block;
		flex: none;
	}

	.titlebar {
		display: flex;
		align-items: flex-start;
		height: 30px;
		background: #2b579a;
		color: #fff;
	}

	.logo {
		display: flex;
		justify-content: center;
		align-items: center;
		width: 25px;
		height: 24px;
	}

	.qcell {
		position: relative;
		display: flex;
		justify-content: center;
		align-items: center;
		width: 24px;
		height: 24px;
	}

	.qcell.hot {
		background: #3060a4;
	}

	.qcaret {
		position: absolute;
		right: -2px;
		top: 10px;
	}

	.apptitle {
		margin-left: 424px;
		padding-top: 7px;
		font-size: 12px;
		letter-spacing: -0.05px;
		color: #e4ebf4;
	}

	.glass {
		position: absolute;
		left: 630px;
		top: -20px;
		width: 40px;
		height: 40px;
		border-radius: 50%;
		background: radial-gradient(circle at 50% 45%, #8fb0d8 0, #a8b8b8 60%, #c0b468 100%);
	}

	.tabs {
		position: relative;
		display: flex;
		align-items: stretch;
		height: 26px;
		background: #2b579a;
	}

	.tab {
		display: flex;
		align-items: center;
		padding: 0 14.3px;
		color: #fff;
		font-size: 12px;
	}

	.tab:first-child {
		padding-left: 15.5px;
	}

	.tab.active {
		margin-left: 2px;
		padding: 0 8px;
		width: 66px;
		box-sizing: border-box;
		justify-content: center;
		background: #f0f0f0;
		color: #2b579a;
	}

	.collapse {
		position: absolute;
		right: 5px;
		top: 8px;
	}

	.ribbon {
		display: flex;
		height: 98px;
		box-sizing: border-box;
		background: #f0f0f0;
		border-bottom: 1px solid #d2d2d2;
	}

	.group {
		display: flex;
		flex-direction: column;
		height: 96px;
		box-sizing: border-box;
		border-right: 1px solid #d6d6d6;
	}

	.gbody {
		display: flex;
		height: 75px;
	}

	.large {
		display: flex;
		flex-direction: column;
		align-items: center;
		flex: none;
		padding-top: 6px;
		box-sizing: border-box;
		color: #a9a9a9;
		font-size: 12px;
		line-height: 15px;
	}

	.bigic {
		margin-bottom: 3px;
		height: 35px;
	}

	.line {
		white-space: nowrap;
	}

	.line .caret,
	.sitem .caret {
		margin-left: 3px;
		vertical-align: middle;
		fill: #adadad;
	}

	.smallcol {
		display: flex;
		flex-direction: column;
		flex: none;
		padding-top: 5px;
		box-sizing: border-box;
	}

	.sitem {
		display: flex;
		align-items: center;
		gap: 3px;
		height: 22px;
		color: #a9a9a9;
		white-space: nowrap;
	}

	.glabel {
		text-align: center;
		line-height: 18px;
		padding-top: 2px;
		color: #5c5c5c;
		white-space: nowrap;
	}

	.seltool {
		display: flex;
		align-items: center;
		width: 400px;
		height: 31px;
		padding-left: 4px;
		box-sizing: border-box;
		background: #f0f0f0;
	}

	.grip-v {
		width: 2px;
		height: 20px;
		margin-right: 3px;
		background: repeating-linear-gradient(#999 0 1px, transparent 1px 4px);
	}

	.stool {
		display: flex;
		justify-content: center;
		align-items: center;
		width: 22px;
		height: 22px;
	}

	.stool.on {
		background: #dedede;
	}

	.stool.before-combo {
		margin-right: 3px;
	}

	.combo {
		display: flex;
		align-items: center;
		justify-content: space-between;
		flex: none;
		height: 23px;
		margin-right: 4px;
		padding: 0 5px 0 3px;
		box-sizing: border-box;
		background: #fff;
		border: 1px solid #c8c8c8;
		color: #111;
		letter-spacing: -0.3px;
		overflow: hidden;
		white-space: nowrap;
	}

	.combo .caret {
		fill: #777;
		flex: none;
	}

	.tabstrip {
		display: flex;
		align-items: flex-end;
		height: 46px;
		padding-left: 28px;
		box-sizing: border-box;
		border-bottom: 1px solid #cfcfcf;
	}

	.doctabwrap {
		filter: drop-shadow(0 0 0.6px #777);
	}

	.doctab {
		display: flex;
		align-items: center;
		justify-content: flex-end;
		gap: 13px;
		width: 106px;
		height: 18px;
		padding-right: 6px;
		box-sizing: border-box;
		background: #f6f6f6;
		clip-path: polygon(18px 0, 100% 0, 100% 100%, 0 100%);
		font-size: 12px;
		font-weight: 500;
		color: #333;
	}

	.work {
		display: flex;
		flex: none;
		height: 724px;
	}

	.rail {
		display: flex;
		flex-direction: column;
		align-items: center;
		flex: none;
		width: 25px;
		margin-top: 127px;
		background: #f0f0f0;
	}

	.r-grip {
		flex: none;
		width: 16px;
		height: 16px;
		background: linear-gradient(#999, #999) 0 50% / 100% 1px no-repeat;
		mask: repeating-linear-gradient(90deg, #000 0 2px, transparent 2px 4px);
	}

	.r-sep {
		flex: none;
		width: 22px;
		height: 1px;
		margin: 3px 0;
		background: #d0d0d0;
	}

	.r-back {
		display: flex;
		align-items: center;
		flex: none;
		width: 10px;
		height: 8px;
	}

	.r-ic {
		display: flex;
		justify-content: center;
		align-items: center;
		flex: none;
		height: 22px;
	}

	.panel {
		display: flex;
		flex-direction: column;
		flex: none;
		width: 280px;
		margin-left: 1px;
	}

	.phead {
		display: flex;
		align-items: center;
		gap: 9px;
		height: 24px;
		padding: 0 6px 0 4px;
	}

	.ptitle {
		flex: 1;
		color: #2a6ccb;
	}

	.pfilter {
		display: flex;
		justify-content: flex-end;
		align-items: center;
		gap: 4px;
		height: 21px;
		background: #fff;
	}

	.tree {
		flex: 1;
		padding-top: 1px;
		background: #fff;
		border: 1px solid #a0a0a0;
		box-sizing: border-box;
	}

	.troot,
	.trow {
		display: flex;
		align-items: center;
		height: 18px;
		line-height: 18px;
		padding-left: 4px;
	}

	.troot {
		gap: 3px;
	}

	.rooticon {
		position: relative;
		width: 18px;
	}

	.trow .ic {
		margin-right: 5px;
	}

	.exp {
		flex: none;
	}

	.ptabs {
		display: flex;
		align-items: stretch;
		height: 22px;
	}

	.ptab {
		display: flex;
		align-items: center;
		gap: 3px;
		padding: 0 3px 0 4px;
		margin-right: 2px;
		color: #444;
	}

	.ptab.on {
		width: 58px;
		box-sizing: border-box;
		margin-left: 1px;
		margin-right: 0;
		padding: 0 2px;
		gap: 2px;
		background: #f8f8f8;
		border: 1px solid #b4b4b4;
		border-top: 0;
		color: #222;
	}

	.viewport {
		position: relative;
		flex: none;
		width: 1366px;
		height: 723px;
		margin-left: 6px;
		background: linear-gradient(#4a6fa0, #ffffff);
		border-left: 2px solid #6a6a6a;
		border-top: 1px solid #6a6a6a;
	}

	.scene {
		display: block;
	}

	.triad text {
		font-family: 'Liberation Sans', sans-serif;
		font-size: 9px;
		text-anchor: middle;
	}

	.vcaret {
		position: absolute;
		right: 1px;
		top: -14px;
	}

	.catalog {
		display: flex;
		flex-direction: column;
		height: 31px;
		padding-left: 7px;
		box-sizing: border-box;
	}

	.catlabel {
		display: flex;
		align-items: center;
		gap: 3px;
		height: 25px;
		color: #333;
	}

	.catbar {
		width: 103px;
		height: 6px;
		background: #d4d4d4;
	}

	.status {
		display: flex;
		align-items: center;
		height: 24px;
		box-sizing: border-box;
		background: #f0f0f0;
		border-top: 1px solid #cdcdcd;
		color: #333;
		white-space: pre;
	}

	.s-msg {
		width: 912px;
		padding-left: 3px;
		flex: none;
		letter-spacing: -0.1px;
	}

	.s-view {
		width: 138px;
		flex: none;
		letter-spacing: -0.4px;
	}

	.s-units {
		width: 90px;
		flex: none;
	}

	.s-cell {
		display: flex;
		justify-content: center;
		align-items: center;
		flex: none;
		height: 23px;
	}

	.s-cell.on {
		background: #cfcfcf;
	}

	.status .combo {
		height: 22px;
		margin-right: 1px;
	}

	.dialog {
		position: absolute;
		left: 1260px;
		top: 0;
		width: 407px;
		height: 270px;
		display: flex;
		flex-direction: column;
		background: #f0f0f0;
		box-shadow: 0 2px 10px rgba(0, 0, 0, 0.45);
		font-size: 11px;
		letter-spacing: -0.1px;
	}

	.dtitle {
		display: flex;
		justify-content: space-between;
		align-items: center;
		height: 26px;
		padding: 0 10px 0 3px;
		background: #fff;
		color: #111;
		font-size: 12px;
	}

	.dbody {
		display: flex;
		flex-direction: column;
		flex: 1;
		color: #111;
	}

	.dcols {
		display: flex;
		height: 193px;
		padding-left: 23px;
		gap: 22px;
	}

	.dcol {
		display: flex;
		flex-direction: column;
	}

	.dcol.left {
		width: 185px;
	}

	.dcol.right {
		width: 155px;
	}

	.dq {
		margin: 0;
		height: 43px;
		box-sizing: border-box;
		line-height: 13px;
		white-space: nowrap;
	}

	.dq.two {
		margin-left: -3px;
		padding-top: 11px;
	}

	.dq.one {
		padding-top: 22px;
	}

	.dbox {
		flex: 1;
		border: 1px solid #dcdcdc;
		padding: 5px 0 0 18px;
		box-sizing: border-box;
	}

	.right .dbox {
		padding: 16px 0 0 21px;
	}

	.opt {
		display: flex;
		align-items: flex-start;
		margin-bottom: 7px;
		height: 37px;
	}

	.opt.gapped {
		margin-top: 12px;
	}

	.opt.second {
		margin-top: 18px;
	}

	.opt.second .radio {
		margin-top: 1px;
	}

	.thumb {
		flex: none;
		width: 48px;
		height: 37px;
		background: #fff;
		border-left: 1px solid #808080;
		border-top: 1px solid #808080;
		box-sizing: border-box;
	}

	.radio {
		position: relative;
		flex: none;
		width: 13px;
		height: 13px;
		margin: 2px 4px 0 3px;
		background: #fff;
		border: 1px solid #333;
		border-radius: 50%;
		box-sizing: border-box;
	}

	.radio.checked::after {
		content: '';
		position: absolute;
		inset: 2px;
		border-radius: 50%;
		background: #333;
	}

	.rlabel {
		padding-top: 1px;
		line-height: 17px;
		white-space: nowrap;
	}

	.dbuttons {
		display: flex;
		gap: 5px;
		padding: 19px 0 0 12px;
	}

	button {
		width: 73px;
		height: 21px;
		padding: 0;
		background: #e1e1e1;
		border: 1px solid #adadad;
		font: inherit;
		font-size: 11.500px;
		color: #111;
	}

	button.disabled {
		background: #cccccc;
		color: #7a7a7a;
		border-color: #bfbfbf;
	}

	button.primary {
		border: 2px solid #0078d7;
	}
</style>
